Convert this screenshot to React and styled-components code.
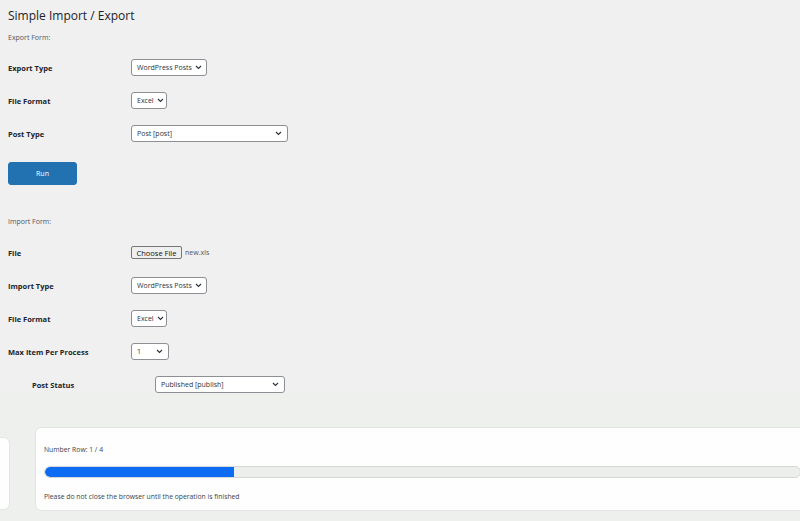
import React from "react";
import styled, { createGlobalStyle } from "styled-components";

const Global = createGlobalStyle`
  html, body {
    margin: 0;
    padding: 0;
    background: #f0f0f1;
  }
  body {
    width: 800px;
    height: 521px;
    overflow: hidden;
    font-family: "Open Sans", "Noto Sans", sans-serif;
    color: #1d2327;
  }
`;

const Screen = styled.div`
  width: 800px;
  height: 521px;
  display: flex;
  flex-direction: column;
  overflow: hidden;
`;

const Admin = styled.div`
  height: 393px;
  flex: none;
  padding: 0 8px;
  overflow: hidden;
  background: #f0f0f1;
`;

const Title = styled.h1`
  margin: 8px 0 0;
  font-size: 12px;
  line-height: 16px;
  font-weight: 400;
  color: #1d2327;
`;

const FormNote = styled.p`
  margin: ${(p) => p.top}px 0 0;
  font-size: 7px;
  line-height: 12px;
  color: #50575e;
`;

const Table = styled.div`
  margin-top: ${(p) => p.top || 7}px;
  display: flex;
  flex-direction: column;
`;

const Row = styled.div`
  height: 33px;
  display: flex;
  align-items: center;
`;

const Label = styled.div`
  width: 123px;
  flex: none;
  font-size: 7.5px;
  font-weight: 700;
  color: #1d2327;
  padding-left: ${(p) => p.indent || 0}px;
  box-sizing: border-box;
`;

const Select = styled.div`
  width: ${(p) => p.w}px;
  height: 17px;
  margin-left: ${(p) => p.shift || 0}px;
  box-sizing: border-box;
  border: 1px solid #8c8f94;
  border-radius: 3px;
  background: #fff;
  display: flex;
  align-items: center;
  justify-content: space-between;
  gap: 3px;
  padding: 0 5px;
  font-size: 7px;
  color: #2c3338;
  white-space: nowrap;
`;

const Chevron = () => (
  <svg width="7" height="5" viewBox="0 0 7 5" style={{ flex: "none" }}>
    <path d="M1 1l2.5 2.5L6 1" fill="none" stroke="#2c3338" strokeWidth="1.1" />
  </svg>
);

const RunButton = styled.button`
  display: block;
  margin-top: 12px;
  width: 69px;
  height: 23px;
  border: 1px solid #2271b1;
  border-radius: 3px;
  background: #2271b1;
  color: #fff;
  font-family: inherit;
  font-size: 7px;
  padding: 0;
`;

const FileWrap = styled.div`
  display: flex;
  align-items: center;
  gap: 3px;
`;

const FileButton = styled.div`
  height: 13px;
  width: 51px;
  box-sizing: border-box;
  border: 1px solid #767676;
  border-radius: 2px;
  background: #efefef;
  font-size: 7.5px;
  color: #111;
  display: flex;
  align-items: center;
  justify-content: center;
`;

const FileName = styled.span`
  font-size: 7px;
  color: #50575e;
`;

const Lower = styled.div`
  flex: 1;
  background: #edf0ed;
  display: flex;
  align-items: flex-start;
  gap: 25px;
  padding-top: 34px;
  overflow: hidden;
`;

const SideCard = styled.div`
  flex: none;
  width: 10px;
  height: 73px;
  margin-top: 10px;
  box-sizing: border-box;
  background: #fdfefd;
  border: 1px solid #e2e5e2;
  border-left: none;
  border-radius: 0 6px 6px 0;
`;

const ProgressCard = styled.div`
  flex: none;
  width: 790px;
  height: 84px;
  box-sizing: border-box;
  background: #fdfefd;
  border: 1px solid #e2e5e2;
  border-radius: 6px;
  padding: 16px 0 0 8px;
`;

const Info = styled.div`
  font-size: 6.8px;
  line-height: 12px;
  color: #3c434a;
  margin-top: ${(p) => p.top || 0}px;
`;

const Track = styled.div`
  margin-top: 10px;
  width: 757px;
  height: 12px;
  box-sizing: border-box;
  background: #eceeec;
  border: 1px solid #d5d8d5;
  border-radius: 6px;
  overflow: hidden;
`;

const Fill = styled.div`
  height: 100%;
  background: #0b6cf3;
  border-radius: 6px 0 0 6px;
`;

export default function App() {
  const done = 1;
  const total = 4;
  return (
    <Screen>
      <Global />
      <Admin>
        <Title>Simple Import / Export</Title>
        <FormNote top={8}>Export Form:</FormNote>
        <Table>
          <Row>
            <Label>Export Type</Label>
            <Select w={76}>
              WordPress Posts <Chevron />
            </Select>
          </Row>
          <Row>
            <Label>File Format</Label>
            <Select w={36}>
              Excel <Chevron />
            </Select>
          </Row>
          <Row>
            <Label>Post Type</Label>
            <Select w={157}>
              Post [post] <Chevron />
            </Select>
          </Row>
        </Table>
        <RunButton>Run</RunButton>
        <FormNote top={31}>Import Form:</FormNote>
        <Table top={8}>
          <Row>
            <Label>File</Label>
            <FileWrap>
              <FileButton>Choose File</FileButton>
              <FileName>new.xls</FileName>
            </FileWrap>
          </Row>
          <Row>
            <Label>Import Type</Label>
            <Select w={76}>
              WordPress Posts <Chevron />
            </Select>
          </Row>
          <Row>
            <Label>File Format</Label>
            <Select w={36}>
              Excel <Chevron />
            </Select>
          </Row>
          <Row>
            <Label>Max Item Per Process</Label>
            <Select w={38}>
              1 <Chevron />
            </Select>
          </Row>
          <Row>
            <Label indent={24}>Post Status</Label>
            <Select w={130} shift={24}>
              Published [publish] <Chevron />
            </Select>
          </Row>
        </Table>
      </Admin>
      <Lower>
        <SideCard />
        <ProgressCard>
          <Info>Number Row: {done} / {total}</Info>
          <Track>
            <Fill style={{ width: `${(done / total) * 100}%` }} />
          </Track>
          <Info top={13}>Please do not close the browser until the operation is finished</Info>
        </ProgressCard>
      </Lower>
    </Screen>
  );
}
